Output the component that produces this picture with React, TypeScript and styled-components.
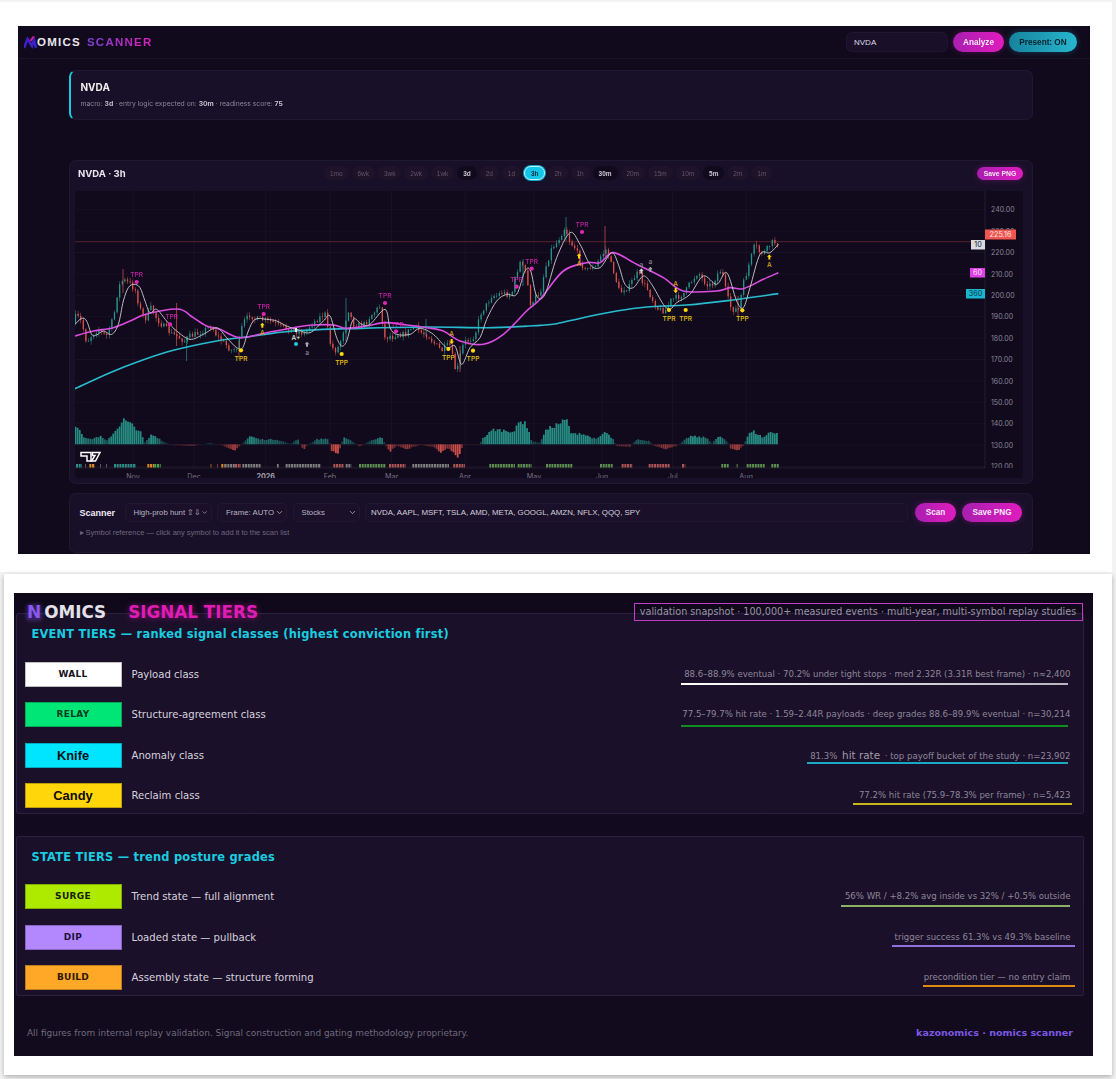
import React from "react";
import styled, { createGlobalStyle } from "styled-components";
import { ChevronDown } from "lucide-react";

const GlobalStyle = createGlobalStyle`
  html, body {
    margin: 0;
    padding: 0;
    background: #f3f3f4;
  }
  * { box-sizing: border-box; }
`;

const Page = styled.div`
  width: 1116px;
  height: 1079px;
  padding-top: 2px;
  overflow: hidden;
`;

const SheetTop = styled.section`
  width: 1112px;
  height: 570px;
  padding: 24px 0 0 18px;
  background: #fff;
`;

const SheetBottom = styled.section`
  width: 1108px;
  height: 501px;
  margin: 2px 0 0 4px;
  padding: 19px 0 0 10px;
  background: #fff;
  box-shadow: 0 2px 5px rgba(0, 0, 0, 0.28);
`;

/* ---------- scanner window ---------- */

const ScannerWindow = styled.div`
  width: 1072px;
  height: 528px;
  background: #110a1c;
  font-family: "Liberation Sans", Arial, sans-serif;
  color: #e9e6f0;
  filter: blur(0.3px);
`;

const TopBar = styled.header`
  display: flex;
  align-items: center;
  height: 33px;
  padding: 0 13px 0 6px;
  border-bottom: 1px solid rgba(255, 255, 255, 0.04);
`;

const Brand = styled.div`
  display: flex;
  align-items: center;
  font-size: 11.5px;
  font-weight: 700;
  letter-spacing: 1.25px;
`;

const BrandMark = styled.svg`
  width: 13px;
  height: 14px;
  filter: blur(0.5px);
`;

const BrandAccent = styled.span`
  margin-left: 6px;
  background: linear-gradient(90deg, #7b45d8, #e01cb8);
  -webkit-background-clip: text;
  background-clip: text;
  color: transparent;
`;

const TopActions = styled.div`
  display: flex;
  align-items: center;
  gap: 5px;
  margin-left: auto;
`;

const TickerInput = styled.input`
  width: 102px;
  height: 20px;
  padding: 0 7px;
  border: 1px solid rgba(255, 255, 255, 0.03);
  border-radius: 6px;
  outline: none;
  background: #190f29;
  color: #ddd9e6;
  font: 8px "Liberation Sans", Arial, sans-serif;
`;

const PillButton = styled.button<{ $teal?: boolean; $w: number; $h?: number; $size?: number }>`
  width: ${(p) => p.$w}px;
  height: ${(p) => p.$h ?? 20}px;
  padding: 0;
  border: 0;
  border-radius: 10px;
  background: ${(p) =>
    p.$teal ? "linear-gradient(90deg, #17839e, #27b6cf)" : "linear-gradient(90deg, #a81fb0, #e01cbe)"};
  box-shadow: 0 0 6px ${(p) => (p.$teal ? "rgba(30, 170, 200, 0.35)" : "rgba(220, 30, 190, 0.3)")};
  color: ${(p) => (p.$teal ? "#07222c" : "#f6e9f7")};
  font: 700 ${(p) => p.$size ?? 8.2}px "Liberation Sans", Arial, sans-serif;
`;

const Content = styled.main`
  padding: 11px 57px 0 50.5px;
`;

const InfoCard = styled.div`
  height: 50px;
  margin-bottom: 40px;
  padding: 10px 10px;
  border: 1px solid rgba(255, 255, 255, 0.035);
  border-left: 2px solid #18c8dc;
  border-radius: 7px;
  background: #181028;
`;

const InfoTitle = styled.div`
  font: 700 10px/12px Inter, sans-serif;
  color: #eee;
`;

const InfoLine = styled.div`
  margin-top: 6px;
  font: 6.8px/9px Inter, sans-serif;
  color: #8b8597;
  b { color: #c4c0cc; font-weight: 700; }
`;

const ChartCard = styled.div`
  height: 323.5px;
  padding: 0 8px 0 5.5px;
  border: 1px solid rgba(255, 255, 255, 0.035);
  border-radius: 7px;
  background: #181028;
`;

const ChartHead = styled.div`
  display: flex;
  align-items: center;
  height: 29.5px;
  padding: 0 1px 5px 3px;
`;

const ChartTitle = styled.div`
  flex: 0 0 246px;
  font: 700 9.5px Inter, sans-serif;
  color: #e8e5ee;
`;

const Frames = styled.div`
  display: flex;
  gap: 3px;
`;

const FramePill = styled.button<{ $on?: boolean; $strong?: boolean }>`
  height: 14px;
  padding: 0 5.95px;
  border: ${(p) => (p.$on ? "1px solid #bff4ff" : "0")};
  border-radius: 7px;
  background: ${(p) => (p.$on ? "#12c6ea" : p.$strong ? "#110a1c" : "#1e1329")};
  box-shadow: ${(p) => (p.$on ? "0 0 0 1px #12a8c8" : "none")};
  color: ${(p) => (p.$on ? "#06303c" : p.$strong ? "#c9c5d2" : "#5e576c")};
  font: ${(p) => (p.$on || p.$strong ? 700 : 400)} 6.5px "Liberation Sans", Arial, sans-serif;
`;

const SaveSlot = styled.div`
  display: flex;
  margin-left: auto;
`;

const Plot = styled.svg`
  display: block;
  width: 948px;
  height: 287.5px;
  border-radius: 3px;
`;

const ScannerCard = styled.div`
  height: 60px;
  margin-top: 9.5px;
  padding: 9px 10px 0 10px;
  border: 1px solid rgba(255, 255, 255, 0.035);
  border-radius: 7px;
  background: #181028;
`;

const ScannerRow = styled.div`
  display: flex;
  align-items: center;
  height: 19px;
`;

const ScannerLabel = styled.div`
  flex: 0 0 45px;
  font: 700 9px "Liberation Sans", Arial, sans-serif;
  color: #eeeaf3;
`;

const FieldBox = styled.div<{ $w: number }>`
  display: flex;
  align-items: center;
  justify-content: space-between;
  width: ${(p) => p.$w}px;
  height: 19px;
  margin-right: 5.5px;
  padding: 0 2px 0 8px;
  border: 1px solid rgba(255, 255, 255, 0.03);
  border-radius: 5px;
  background: #1a1029;
  color: #b9b4c3;
  font-size: 7.8px;
  white-space: nowrap;
`;

const SymbolInput = styled.input`
  width: 543px;
  height: 19px;
  margin-right: 7px;
  padding: 0 5px;
  border: 1px solid rgba(255, 255, 255, 0.03);
  border-radius: 5px;
  outline: none;
  background: #1a1029;
  color: #d5d1dd;
  font: 7.9px "Liberation Sans", Arial, sans-serif;
`;

const ScanActions = styled.div`
  display: flex;
  gap: 6px;
`;

const ScannerHint = styled.div`
  margin-top: 6px;
  font-size: 7.5px;
  color: #6d667c;
`;

/* ---------- signal tiers sheet ---------- */

const TiersWindow = styled.div`
  width: 1079px;
  height: 463px;
  padding: 0 9px 0 2px;
  background: linear-gradient(180deg, #0d0717 0, #130b20 30px, #120a1d 100%);
  font-family: "DejaVu Sans", sans-serif;
`;

const TiersHead = styled.div`
  position: relative;
  z-index: 1;
  display: flex;
  align-items: center;
  height: 29px;
  margin-bottom: -9px;
  padding: 9px 0 0 11px;
`;

const LogoN = styled.span`
  font-size: 17px;
  font-weight: 700;
  color: #8a58ee;
  background: rgba(120, 80, 230, 0.28);
  box-shadow: 0 0 4px rgba(120, 80, 230, 0.5);
  line-height: 15px;
`;

const LogoRest = styled.span`
  margin-left: 3px;
  font-size: 16.8px;
  font-weight: 700;
  color: #e4e1ea;
`;

const HeadAccent = styled.span`
  margin-left: 22px;
  font-size: 16.8px;
  font-weight: 700;
  color: #e01cb4;
  text-shadow: 0 0 6px rgba(224, 28, 180, 0.55);
`;

const Snapshot = styled.div`
  margin-left: auto;
  width: 449px;
  height: 18px;
  margin-right: 1.5px;
  border: 1px solid #c23dc6;
  color: #9a94a6;
  font-size: 9.65px;
  line-height: 16px;
  text-align: center;
  white-space: nowrap;
`;

const TierCard = styled.div<{ $gap: number }>`
  position: relative;
  padding: 12px 8px 5px 7.5px;
  border: 1px solid #2a2140;
  border-radius: 2px;
  background: #1b1029;
  & + & { margin-top: 22px; }
  h2 {
    margin: 0 0 ${(p) => p.$gap}px 7px;
    font-size: 11.4px;
    line-height: 16px;
    font-weight: 700;
    letter-spacing: 0.24px;
    color: #19cde0;
  }
`;

const TierRows = styled.div`
  display: flex;
  flex-direction: column;
  gap: 15.4px;
`;

const TierRow = styled.div`
  display: flex;
  align-items: flex-start;
  height: 25px;
`;

const Chip = styled.div<{ $bg: string; $fg: string; $big?: boolean }>`
  flex: 0 0 97px;
  height: 25px;
  margin-right: 10px;
  border: 1px solid rgba(0, 0, 0, 0.25);
  background: ${(p) => p.$bg};
  color: ${(p) => p.$fg};
  text-align: center;
  font: 700 ${(p) => (p.$big ? "12.9px/24px \"Liberation Sans\", Arial" : "9px/23px \"DejaVu Sans\"")}, sans-serif;
  letter-spacing: ${(p) => (p.$big ? 0 : 0.3)}px;
`;

const TierName = styled.div`
  font-size: 10.1px;
  line-height: 25px;
  color: #d6d2de;
`;

const StatBlock = styled.div`
  display: flex;
  flex-direction: column;
  align-items: flex-end;
  margin-left: auto;
  padding-top: 5px;
`;

const StatText = styled.div`
  height: 14px;
  margin-right: 4.6px;
  font-size: 8.57px;
  line-height: 14px;
  color: #8d8799;
  white-space: nowrap;
  em { font-style: normal; font-size: 10.4px; margin: 0 2px; color: #a29cac; }
`;

const StatLine = styled.div<{ $w: number; $r: number; $c: string; $gap: number }>`
  width: ${(p) => p.$w}px;
  height: 2px;
  margin-top: ${(p) => p.$gap}px;
  margin-right: ${(p) => p.$r}px;
  background: ${(p) => p.$c};
`;

const FootRow = styled.footer`
  display: flex;
  align-items: center;
  justify-content: space-between;
  height: 16px;
  margin-top: 29px;
  padding: 0 11px 0 11px;
`;

const FootNote = styled.div`
  font-size: 8.95px;
  color: #6f6a7c;
`;

const FootBrand = styled.div`
  font-size: 9.55px;
  font-weight: 700;
  color: #7c58e2;
`;

/* ---------- chart data (traced off the reference) ---------- */

type Pt = [number, number];

// two source grids, left half and right half of the plot
const L = (x: number, y: number): Pt => [60 + x / 3, 190 + y / 3];
const R = (x: number, y: number): Pt => [530 + x / 3, 190 + y / 3];

const trace = (a: number[][], b: number[][]): Pt[] => [
  ...a.map(([x, y]) => L(x, y)),
  ...b.map(([x, y]) => R(x, y)),
];

const fastLine = trace(
  [[45,400],[65,382],[80,390],[95,430],[110,432],[130,420],[155,430],[175,400],[190,330],[205,290],[222,280],[240,290],[255,330],[270,365],[290,355],[320,390],[350,420],[390,445],[430,430],[470,410],[500,440],[530,470],[548,470],[565,420],[585,385],[620,385],[650,390],[680,405],[710,415],[750,425],[790,390],[810,375],[830,440],[845,465],[860,450],[880,385],[905,400],[930,400],[975,355],[990,410],[1010,430],[1050,430],[1080,412],[1120,430],[1160,470],[1185,465],[1205,520],[1230,470],[1260,440],[1280,385],[1310,330],[1340,310],[1370,310],[1395,240],[1412,240]],
  [[20,315],[45,310],[80,200],[120,125],[150,160],[180,220],[210,230],[245,185],[265,220],[285,280],[310,290],[340,255],[365,280],[400,340],[420,355],[440,335],[480,310],[520,255],[560,280],[590,245],[620,330],[640,350],[660,290],[690,190],[720,185],[745,160]]
);

const midLine = trace(
  [[45,435],[100,420],[160,410],[210,390],[250,372],[300,360],[360,355],[400,380],[440,405],[480,415],[540,440],[620,425],[700,410],[760,402],[820,402],[860,412],[920,405],[975,395],[1040,402],[1100,410],[1150,420],[1200,450],[1270,460],[1330,430],[1400,360]],
  [[30,325],[100,240],[170,215],[210,215],[250,185],[320,220],[400,260],[460,300],[560,300],[600,290],[640,293],[700,265],[745,245]]
);

const slowLine = trace(
  [[45,593],[150,545],[240,510],[340,478],[470,450],[560,438],[700,420],[900,412],[1100,408],[1300,410]],
  [[30,403],[80,398],[160,380],[260,360],[350,348],[470,342],[600,328],[745,308]]
);

const histTrace = trace(
  [[45,60],[60,45],[70,25],[90,15],[120,25],[140,10],[165,40],[190,75],[215,60],[240,40],[255,5],[275,30],[295,20],[310,8],[340,-3],[400,-5],[450,5],[490,-5],[525,-18],[545,0],[570,25],[600,15],[650,15],[690,2],[715,15],[730,-18],[745,0],[770,15],[805,18],[815,-20],[835,-30],[850,20],[880,8],[900,-8],[920,5],[965,25],[975,0],[990,-22],[1010,-5],[1040,-15],[1080,-2],[1120,-8],[1140,-25],[1165,-10],[1195,-40],[1210,0],[1255,-2],[1270,20],[1300,45],[1365,40],[1375,65],[1395,72],[1415,10]],
  [[30,5],[45,40],[60,50],[110,75],[125,30],[150,35],[200,15],[225,38],[250,15],[260,-5],[300,-8],[320,15],[360,10],[370,-5],[410,-15],[440,-5],[480,25],[530,20],[545,5],[570,25],[595,5],[600,-12],[625,-20],[640,-5],[655,30],[670,40],[700,20],[720,38],[745,35]]
);

const lerp = (pts: Pt[], x: number) => {
  if (x <= pts[0][0]) return pts[0][1];
  for (let i = 1; i < pts.length; i++) {
    if (x <= pts[i][0]) {
      const t = (x - pts[i - 1][0]) / (pts[i][0] - pts[i - 1][0]);
      return pts[i - 1][1] + t * (pts[i][1] - pts[i - 1][1]);
    }
  }
  return pts[pts.length - 1][1];
};

const smooth = (pts: Pt[]) => {
  let d = `M${pts[0][0]} ${pts[0][1]}`;
  for (let i = 0; i < pts.length - 1; i++) {
    const p0 = pts[i - 1] || pts[i];
    const p1 = pts[i];
    const p2 = pts[i + 1];
    const p3 = pts[i + 2] || p2;
    d += `C${p1[0] + (p2[0] - p0[0]) / 6} ${p1[1] + (p2[1] - p0[1]) / 6} ${p2[0] - (p3[0] - p1[0]) / 6} ${p2[1] - (p3[1] - p1[1]) / 6} ${p2[0]} ${p2[1]}`;
  }
  return d;
};

let seed = 7;
const rnd = () => {
  seed = (seed * 16807) % 2147483647;
  return seed / 2147483647;
};

const UP = "#28958a";
const DOWN = "#d9534c";
const X0 = 75.5;
const X1 = 778.5;

type Candle = { x: number; open: number; close: number; high: number; low: number };

const candles: Candle[] = [];
let lastClose = lerp(fastLine, X0);
for (let x = X0; x <= X1; x += 2.6) {
  const here = lerp(fastLine, x);
  const ahead = lerp(fastLine, x + 5);
  const close = ahead + (ahead - here) * 0.6 + (rnd() - 0.5) * 6;
  const high = Math.min(lastClose, close) - rnd() * 3.5 - 0.4;
  const low = Math.max(lastClose, close) + rnd() * 3.5 + 0.4;
  candles.push({ x, open: lastClose, close, high, low });
  lastClose = close;
}

// the tall one-off wicks that stand out in the reference
const SPIKES: [number, number, number, string][] = [
  [123, 268, 292, DOWN], [176.7, 302, 345, DOWN], [186.7, 335, 360, UP], [239, 340, 358, DOWN],
  [346, 297, 340, UP], [426, 318, 335, UP], [460, 345, 371, DOWN], [523, 258, 285, UP],
  [566, 216, 240, UP], [605, 225, 255, DOWN], [738, 295, 315, DOWN],
];

const histBars: { x: number; v: number }[] = [];
for (let x = X0; x <= X1; x += 2.1) {
  const v = lerp(histTrace, x) - 190;
  histBars.push({ x, v: v * (0.86 + rnd() * 0.24) });
}

const strip = (a: number[][], b: number[][]) => [
  ...a.map(([s, e, c]) => ({ s: L(s, 0)[0], e: L(e, 0)[0], c })),
  ...b.map(([s, e, c]) => ({ s: R(s, 0)[0], e: R(e, 0)[0], c })),
];
const stripColors = ["#2f8f88", "#7f7f7f", "#d98a25", "#b05555", "#5f8f4f", "#4aa64a"];
const stateStrip = strip(
  [[48,66,0],[75,77,1],[88,105,2],[120,122,1],[138,140,1],[162,228,0],[262,283,2],[283,302,5],[452,454,2],[472,474,3],[484,494,2],[494,525,1],[525,543,3],[547,603,1],[651,656,1],[677,783,1],[820,852,3],[857,874,1],[897,978,4],[987,1037,3],[1057,1167,1],[1180,1215,3],[1288,1365,4],[1373,1415,4]],
  [[48,128,4],[210,248,4],[275,308,3],[356,420,3],[456,466,3],[574,596,4],[620,623,4],[650,704,4],[724,747,4]]
);

const PRICES = [240, 230, 220, 210, 200, 190, 180, 170, 160, 150, 140, 130, 120];
const priceY = (p: number) => 208.7 + (240 - p) * 2.14;

const MONTHS: [string, number, boolean?][] = [
  ["Nov", 133], ["Dec", 194], ["2026", 265.7, true], ["Feb", 330], ["Mar", 391.7],
  ["Apr", 465], ["May", 534], ["Jun", 602], ["Jul", 672.7], ["Aug", 746],
];

// dot position, then label position
const TOPS = [
  [...L(230,273), ...L(230,252)], [...L(330,400), ...L(335,378)], [...L(611,369), ...L(611,347)],
  [...L(975,336), ...L(975,315)], [...L(1008,421), ...L(1012,400)], [...L(1370,287), ...L(1370,265)],
  [...L(1415,233), ...L(1415,212)], [...R(156,123), ...R(156,101)],
];
const BOTTOMS: [number, number, string][] = [
  [...L(543,478), "TPR"], [...L(845,489), "TPP"], [...L(1165,474), "TPP"], [...L(1239,479), "TPP"],
  [...R(417,357), "TPR"], [...R(467,357), "TPR"], [...R(637,358), "TPP"],
];
// arrow position, arrow direction, label position
const ARROWS: [Pt, number, Pt][] = [
  [L(607,403), 1, L(607,425)], [L(1175,451), -1, L(1175,428)], [R(147,195), 1, R(147,219)],
  [R(437,298), -1, R(437,277)], [R(718,198), 1, R(718,222)],
];

function Arrow({ at, dir, color }: { at: Pt; dir: number; color: string }) {
  const [x, y] = at;
  return (
    <path
      d={`M${x} ${y - 2.6 * dir}L${x + 2.4} ${y - 0.2 * dir}H${x + 1}V${y + 2.4 * dir}H${x - 1}V${y - 0.2 * dir}H${x - 2.4}Z`}
      fill={color}
    />
  );
}

function Chart() {
  return (
    <Plot viewBox="75 190 948 287.5">
      <defs>
        <clipPath id="axisClip">
          <rect x="985" y="190" width="38" height="277" />
        </clipPath>
      </defs>
      <rect x="75" y="190" width="948" height="288" fill="#100a1c" />

      {PRICES.map((p) => (
        <line key={p} x1="75" x2="985" y1={priceY(p)} y2={priceY(p)} stroke="#fff" strokeOpacity="0.03" strokeWidth="1" />
      ))}
      {MONTHS.map(([m, x]) => (
        <line key={m} x1={x} x2={x} y1="190" y2="467" stroke="#fff" strokeOpacity="0.035" strokeWidth="1" />
      ))}
      <line x1="75" x2="985" y1="240.7" y2="240.7" stroke="#ef5350" strokeOpacity="0.4" strokeWidth="0.8" />

      {histBars.map(({ x, v }) => {
        const size = Math.abs(v);
        const strong = Math.min(0.95, 0.2 + size / 11);
        return (
          <rect
            key={x}
            x={x - 0.9}
            width="1.8"
            y={v > 0 ? 443.3 - v : 443.3}
            height={Math.max(size, 0.6)}
            fill={v > 0 ? UP : DOWN}
            opacity={strong}
          />
        );
      })}

      {stateStrip.map(({ s, e, c }) => (
        <line
          key={s}
          x1={s}
          x2={e}
          y1="464.7"
          y2="464.7"
          stroke={stripColors[c]}
          strokeWidth="3.4"
          strokeDasharray="2 0.7"
        />
      ))}

      {candles.map(({ x, open, close, high, low }) => {
        const color = close < open ? UP : DOWN;
        return (
          <g key={x} fill={color}>
            <rect x={x - 0.25} width="0.5" y={high} height={low - high} />
            <rect x={x - 0.65} width="1.3" y={Math.min(open, close)} height={Math.max(Math.abs(open - close), 0.7)} />
          </g>
        );
      })}
      {SPIKES.map(([x, top, bottom, color]) => (
        <rect key={x} x={x - 0.35} width="0.7" y={top} height={bottom - top} fill={color} />
      ))}

      <path d={smooth(slowLine)} fill="none" stroke="#27bccf" strokeWidth="1.6" />
      <path d={smooth(midLine)} fill="none" stroke="#dc4ce2" strokeWidth="1.6" />
      <path d={smooth(fastLine)} fill="none" stroke="#bcbabf" strokeWidth="1" />

      <g fontFamily="Inter, sans-serif" fontSize="6.6" fontWeight="500" textAnchor="middle">
        {TOPS.map(([x, y, tx, ty]) => (
          <g key={x} fill="#e026b8">
            <circle cx={x} cy={y} r="2.1" />
            <text x={tx} y={ty + 2.4} opacity="0.85">TPR</text>
          </g>
        ))}
        {BOTTOMS.map(([x, y, label]) => (
          <g key={x} fill="#ffd60a">
            <circle cx={x} cy={y} r="2.1" />
            <text x={x} y={y + 10.6} fill="#e8c414">{label}</text>
          </g>
        ))}
        {ARROWS.map(([at, dir, label]) => (
          <g key={at[0]}>
            <Arrow at={at} dir={dir} color="#ffd60a" />
            <text x={label[0]} y={label[1] + 2.4} fill="#d8a818">A</text>
          </g>
        ))}
        <rect x="295" y="327" width="2" height="4" fill="#f0f0f0" />
        <text x="296" y="338.5" fill="#e6e6e6">A+</text>
        <circle cx={296} cy={343} r="2" fill="#22c8e0" />
        <Arrow at={L(741,460)} dir={1} color="#a8a4ac" />
        <text x="307" y="354" fill="#8a8690">a</text>
        <Arrow at={R(334,240)} dir={1} color="#d8d6da" />
        <text x="641.3" y="265.5" fill="#8a8690">a</text>
        <Arrow at={R(361,235)} dir={1} color="#a8a4ac" />
        <text x="650.3" y="263" fill="#8a8690">a</text>
      </g>

      <g stroke="#fff" strokeWidth="1.5" fill="#100a1c">
        <path d="M81 451.5H91V460H87V455H81Z" />
        <path d="M92.5 451.5H100L95.5 460H91.5L95 454.5H92.5Z" />
      </g>

      <line x1="985" x2="985" y1="190" y2="467" stroke="#fff" strokeOpacity="0.08" />
      <line x1="75" x2="985" y1="467" y2="467" stroke="#fff" strokeOpacity="0.08" />

      <g clipPath="url(#axisClip)" fontFamily="Inter, sans-serif" fontSize="7" fill="#8a8598">
        {PRICES.map((p) => (
          <text key={p} x="991" y={priceY(p) + 2.6}>{p.toFixed(2)}</text>
        ))}
      </g>
      <g fontFamily="Inter, sans-serif" fontSize="7.2" textAnchor="middle" fill="#777182">
        {MONTHS.map(([m, x, strong]) => (
          <text key={m} x={x} y="478" fill={strong ? "#a5a0b0" : undefined} fontWeight={strong ? 700 : 400}>{m}</text>
        ))}
      </g>

      <g fontFamily="Inter, sans-serif" fontSize="7.2" textAnchor="middle">
        <rect x="985" y="228.5" width="31" height="10" fill="#f0564f" />
        <text x="1000.5" y="236.2" fill="#ffe8e6">225.16</text>
        <rect x="971" y="239" width="14" height="9.5" fill="#d8dbe2" />
        <text x="978" y="246.3" fill="#222">10</text>
        <rect x="970" y="267" width="15" height="9.5" fill="#df3fe8" />
        <text x="977.5" y="274.3" fill="#fbe6fc">60</text>
        <rect x="966" y="288" width="19" height="9.5" fill="#19b6d0" />
        <text x="975.5" y="295.3" fill="#06303c">360</text>
      </g>
    </Plot>
  );
}

/* ---------- page data ---------- */

const FRAMES = ["1mo", "6wk", "3wk", "2wk", "1wk", "3d", "2d", "1d", "3h", "2h", "1h", "30m", "20m", "15m", "10m", "5m", "2m", "1m"];
const STRONG = ["3d", "30m", "5m"];

type Tier = {
  label: string;
  bg: string;
  fg: string;
  big?: boolean;
  name: string;
  stat: React.ReactNode;
  line: { w: number; r: number; c: string; gap: number };
};

const EVENT_TIERS: Tier[] = [
  {
    label: "WALL", bg: "#fff", fg: "#16121c", name: "Payload class",
    stat: "88.6–88.9% eventual · 70.2% under tight stops · med 2.32R (3.31R best frame) · n≈2,400",
    line: { w: 387, r: 7.5, c: "linear-gradient(90deg, #fff, #b8b4c0)", gap: 2 },
  },
  {
    label: "RELAY", bg: "#00e676", fg: "#083a20", name: "Structure-agreement class",
    stat: "77.5–79.7% hit rate · 1.59–2.44R payloads · deep grades 88.6–89.9% eventual · n=30,214",
    line: { w: 387, r: 7.5, c: "#0e8f20", gap: 3.5 },
  },
  {
    label: "Knife", bg: "#00e5ff", fg: "#071018", big: true, name: "Anomaly class",
    stat: <>81.3% <em>hit rate</em> · top payoff bucket of the study · n=23,902</>,
    line: { w: 260.5, r: 7.5, c: "#1ba8c2", gap: 0 },
  },
  {
    label: "Candy", bg: "#ffd60a", fg: "#0c0a04", big: true, name: "Reclaim class",
    stat: "77.2% hit rate (75.9–78.3% per frame) · n=5,423",
    line: { w: 219.5, r: 3, c: "#c8b81c", gap: 1 },
  },
];

const STATE_TIERS: Tier[] = [
  {
    label: "SURGE", bg: "#aeea00", fg: "#142000", name: "Trend state — full alignment",
    stat: "56% WR / +8.2% avg inside vs 32% / +0.5% outside",
    line: { w: 229.5, r: 5, c: "#8ab264", gap: 1.5 },
  },
  {
    label: "DIP", bg: "#b388ff", fg: "#20103c", name: "Loaded state — pullback",
    stat: "trigger success 61.3% vs 49.3% baseline",
    line: { w: 183.5, r: 0, c: "#9070dc", gap: 1 },
  },
  {
    label: "BUILD", bg: "#ffa726", fg: "#2c1800", name: "Assembly state — structure forming",
    stat: "precondition tier — no entry claim",
    line: { w: 152, r: 0.5, c: "#e08a12", gap: 1.5 },
  },
];

function TierList({ tiers }: { tiers: Tier[] }) {
  return (
    <TierRows>
      {tiers.map((t) => (
        <TierRow key={t.label}>
          <Chip $bg={t.bg} $fg={t.fg} $big={t.big}>{t.label}</Chip>
          <TierName>{t.name}</TierName>
          <StatBlock>
            <StatText>{t.stat}</StatText>
            <StatLine $w={t.line.w} $r={t.line.r} $c={t.line.c} $gap={t.line.gap} />
          </StatBlock>
        </TierRow>
      ))}
    </TierRows>
  );
}

export default function App() {
  return (
    <Page>
      <GlobalStyle />
      <SheetTop>
        <ScannerWindow>
          <TopBar>
            <Brand>
              <BrandMark viewBox="0 0 13 14">
                <path d="M0 13L3.5 4L8 11L10 5L12 13" fill="none" stroke="#3a22c8" strokeWidth="2.6" />
                <path d="M6.5 6L9.5 1.5" stroke="#e0189c" strokeWidth="2" />
              </BrandMark>
              OMICS
              <BrandAccent>SCANNER</BrandAccent>
            </Brand>
            <TopActions>
              <TickerInput defaultValue="NVDA" />
              <PillButton $w={51}>Analyze</PillButton>
              <PillButton $w={68} $teal>Present: ON</PillButton>
            </TopActions>
          </TopBar>
          <Content>
            <InfoCard>
              <InfoTitle>NVDA</InfoTitle>
              <InfoLine>
                macro: <b>3d</b> · entry logic expected on: <b>30m</b> · readiness score: <b>75</b>
              </InfoLine>
            </InfoCard>
            <ChartCard>
              <ChartHead>
                <ChartTitle>NVDA · 3h</ChartTitle>
                <Frames>
                  {FRAMES.map((f) => (
                    <FramePill key={f} $on={f === "3h"} $strong={STRONG.includes(f)}>{f}</FramePill>
                  ))}
                </Frames>
                <SaveSlot>
                  <PillButton $w={46} $h={13} $size={6.8}>Save PNG</PillButton>
                </SaveSlot>
              </ChartHead>
              <Chart />
            </ChartCard>
            <ScannerCard>
              <ScannerRow>
                <ScannerLabel>Scanner</ScannerLabel>
                <FieldBox $w={87}>High-prob hunt ⇧⇩<ChevronDown size={9} /></FieldBox>
                <FieldBox $w={70}>Frame: AUTO<ChevronDown size={9} /></FieldBox>
                <FieldBox $w={67}>Stocks<ChevronDown size={9} /></FieldBox>
                <SymbolInput defaultValue="NVDA, AAPL, MSFT, TSLA, AMD, META, GOOGL, AMZN, NFLX, QQQ, SPY" />
                <ScanActions>
                  <PillButton $w={41} $h={19}>Scan</PillButton>
                  <PillButton $w={60} $h={19}>Save PNG</PillButton>
                </ScanActions>
              </ScannerRow>
              <ScannerHint>▸ Symbol reference — click any symbol to add it to the scan list</ScannerHint>
            </ScannerCard>
          </Content>
        </ScannerWindow>
      </SheetTop>
      <SheetBottom>
        <TiersWindow>
          <TiersHead>
            <LogoN>N</LogoN>
            <LogoRest>OMICS</LogoRest>
            <HeadAccent>SIGNAL TIERS</HeadAccent>
            <Snapshot>validation snapshot · 100,000+ measured events · multi-year, multi-symbol replay studies</Snapshot>
          </TiersHead>
          <TierCard $gap={20}>
            <h2>EVENT TIERS — ranked signal classes (highest conviction first)</h2>
            <TierList tiers={EVENT_TIERS} />
          </TierCard>
          <TierCard $gap={19}>
            <h2>STATE TIERS — trend posture grades</h2>
            <TierList tiers={STATE_TIERS} />
          </TierCard>
          <FootRow>
            <FootNote>All figures from internal replay validation. Signal construction and gating methodology proprietary.</FootNote>
            <FootBrand>kazonomics · nomics scanner</FootBrand>
          </FootRow>
        </TiersWindow>
      </SheetBottom>
    </Page>
  );
}
